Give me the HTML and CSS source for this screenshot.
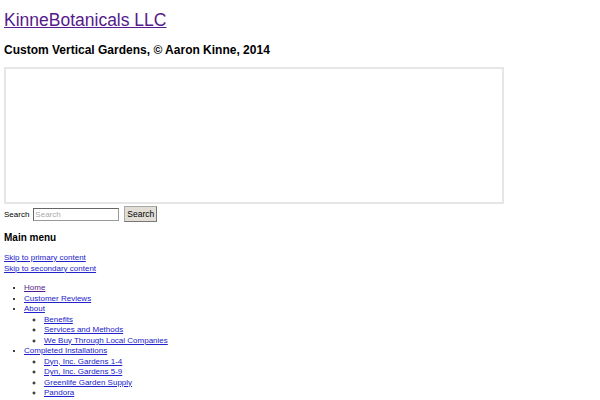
FILE: index.html
```html
<!DOCTYPE html>
<html lang="en">
  <head>
    <meta charset="UTF-8" />
    <title>KinneBotanicals LLC</title>
    <link rel="stylesheet" href="styles.css">
  </head>
  <body>
    <div class="header">
      <h1 class="site-title"><a class="visited" href="#">KinneBotanicals LLC</a></h1>
      <h2 class="site-desc">Custom Vertical Gardens, &copy; Aaron Kinne, 2014</h2>
    </div>

    <div class="banner"></div>

    <form class="search">
      <label for="s">Search</label>
      <input type="text" id="s" placeholder="Search" />
      <button type="button">Search</button>
    </form>

    <div class="nav">
      <h3>Main menu</h3>
      <div class="skip">
        <a href="#">Skip to primary content</a><br />
        <a href="#">Skip to secondary content</a>
      </div>
      <ul class="menu">
        <li><a class="visited" href="#">Home</a></li>
        <li><a href="#">Customer Reviews</a></li>
        <li><a href="#">About</a>
          <ul>
            <li><a href="#">Benefits</a></li>
            <li><a href="#">Services and Methods</a></li>
            <li><a href="#">We Buy Through Local Companies</a></li>
          </ul>
        </li>
        <li><a href="#">Completed Installations</a>
          <ul>
            <li><a href="#">Dyn, Inc. Gardens 1-4</a></li>
            <li><a href="#">Dyn, Inc. Gardens 5-9</a></li>
            <li><a href="#">Greenlife Garden Supply</a></li>
            <li><a href="#">Pandora</a></li>
            <li><a href="#">The Technology and Innovation Accelerator at SSC</a></li>
          </ul>
        </li>
      </ul>
    </div>
  </body>
</html>
```

FILE: styles.css
```css
body {
  font-family: "Liberation Sans", Arial, sans-serif;
  margin: 0 4px;
  color: black;
  background: white;
}
a {
  color: #2222cc;
}
a.visited {
  color: #551a8b;
}
.header {
  padding-top: 10px;
}
.site-title {
  font-size: 17.5px;
  font-weight: normal;
  margin: 0;
  line-height: 20px;
}
.site-desc {
  font-size: 12px;
  margin: 13px 0 0 0;
  line-height: 15px;
}
.banner {
  margin-top: 9px;
  width: 496px;
  height: 133px;
  border: 2px solid #e6e6e6;
}
.search {
  margin: 1px 0 0 0;
  display: flex;
  align-items: center;
  font-size: 8px;
  height: 18px;
}
.search input {
  margin: 0 0 0 4px;
  width: 82px;
  height: 9px;
  padding: 1px 1px;
  font-family: inherit;
  font-size: 8px;
  border: 1px solid #999;
  border-top-color: #666;
  border-left-color: #666;
}
.search input::placeholder {
  color: #aaa;
}
.search button {
  margin-left: 5px;
  font-family: inherit;
  font-size: 8.5px;
  height: 16px;
  padding: 0 2px;
  background: #e2ded6;
  border: 1px solid #aaa;
  border-right-color: #777;
  border-bottom-color: #777;
}
.nav h3 {
  font-size: 10px;
  margin: 8px 0 0 0;
  line-height: 14px;
}
.skip {
  margin-top: 8px;
  font-size: 8px;
  line-height: 10.5px;
}
.menu {
  margin: 9px 0 0 0;
  padding-left: 20px;
  font-size: 8px;
  line-height: 10.5px;
}
.menu ul {
  margin: 0;
  padding-left: 20px;
}
```
